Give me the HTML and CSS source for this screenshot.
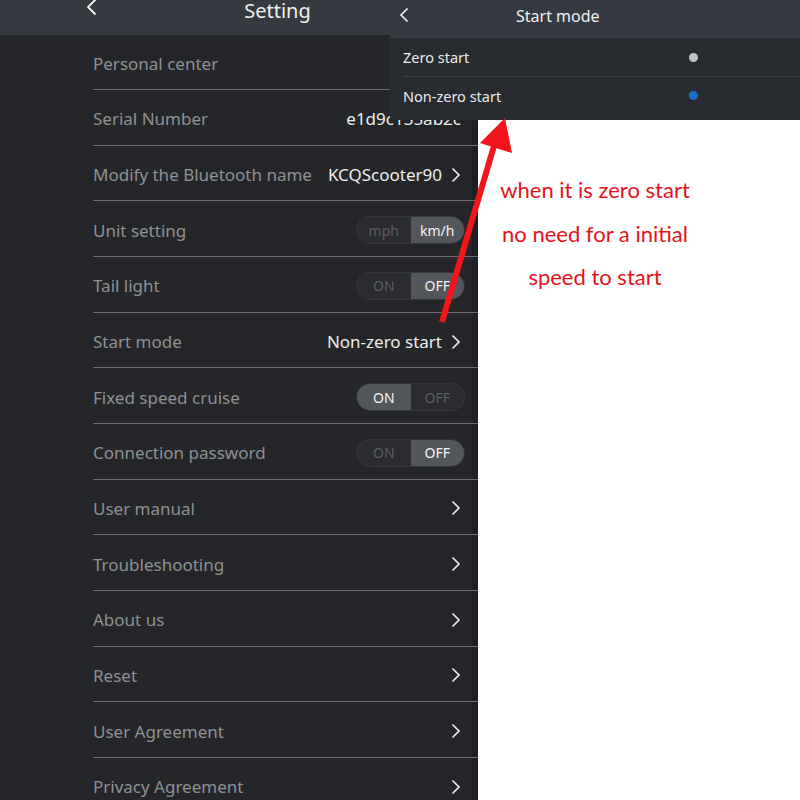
FILE: index.html
```html
<!DOCTYPE html>
<html lang="en">
<head>
<meta charset="utf-8">
<title>Setting</title>
<link rel="stylesheet" href="styles.css">
</head>
<body>
<div class="page">
  <section class="settings">
    <header class="topbar">
      <svg class="back" width="11" height="18" viewBox="0 0 11 18"><path d="M9.5 1.5 L2 9 L9.5 16.5" fill="none" stroke="#f2f2f2" stroke-width="1.8"/></svg>
      <h1 class="title">Setting</h1>
    </header>
    <ul class="list">
      <li class="row"><span class="label">Personal center</span></li>
      <li class="row"><span class="label">Serial Number</span><span class="value">e1d9c135ab2c</span></li>
      <li class="row"><span class="label">Modify the Bluetooth name</span><span class="value">KCQScooter90</span><svg class="chev" width="10" height="16" viewBox="0 0 10 16"><path d="M1.5 1.5 L8 8 L1.5 14.5" fill="none" stroke="#f0f0f0" stroke-width="1.6"/></svg></li>
      <li class="row"><span class="label">Unit setting</span><span class="toggle"><span class="opt">mph</span><span class="opt on">km/h</span></span></li>
      <li class="row"><span class="label">Tail light</span><span class="toggle"><span class="opt">ON</span><span class="opt on">OFF</span></span></li>
      <li class="row"><span class="label">Start mode</span><span class="value">Non-zero start</span><svg class="chev" width="10" height="16" viewBox="0 0 10 16"><path d="M1.5 1.5 L8 8 L1.5 14.5" fill="none" stroke="#f0f0f0" stroke-width="1.6"/></svg></li>
      <li class="row"><span class="label">Fixed speed cruise</span><span class="toggle"><span class="opt on">ON</span><span class="opt">OFF</span></span></li>
      <li class="row"><span class="label">Connection password</span><span class="toggle"><span class="opt">ON</span><span class="opt on">OFF</span></span></li>
      <li class="row"><span class="label">User manual</span><svg class="chev" width="10" height="16" viewBox="0 0 10 16"><path d="M1.5 1.5 L8 8 L1.5 14.5" fill="none" stroke="#f0f0f0" stroke-width="1.6"/></svg></li>
      <li class="row"><span class="label">Troubleshooting</span><svg class="chev" width="10" height="16" viewBox="0 0 10 16"><path d="M1.5 1.5 L8 8 L1.5 14.5" fill="none" stroke="#f0f0f0" stroke-width="1.6"/></svg></li>
      <li class="row"><span class="label">About us</span><svg class="chev" width="10" height="16" viewBox="0 0 10 16"><path d="M1.5 1.5 L8 8 L1.5 14.5" fill="none" stroke="#f0f0f0" stroke-width="1.6"/></svg></li>
      <li class="row"><span class="label">Reset</span><svg class="chev" width="10" height="16" viewBox="0 0 10 16"><path d="M1.5 1.5 L8 8 L1.5 14.5" fill="none" stroke="#f0f0f0" stroke-width="1.6"/></svg></li>
      <li class="row"><span class="label">User Agreement</span><svg class="chev" width="10" height="16" viewBox="0 0 10 16"><path d="M1.5 1.5 L8 8 L1.5 14.5" fill="none" stroke="#f0f0f0" stroke-width="1.6"/></svg></li>
      <li class="row"><span class="label">Privacy Agreement</span><svg class="chev" width="10" height="16" viewBox="0 0 10 16"><path d="M1.5 1.5 L8 8 L1.5 14.5" fill="none" stroke="#f0f0f0" stroke-width="1.6"/></svg></li>
    </ul>
  </section>

  <section class="note">
    <p class="note-text">when it is zero start<br>no need for a initial<br>speed to start</p>
  </section>

  <div class="popup">
    <header class="popup-bar">
      <svg class="back-small" width="10" height="16" viewBox="0 0 10 16"><path d="M8.5 1.5 L2 8 L8.5 14.5" fill="none" stroke="#f2f2f2" stroke-width="1.6"/></svg>
      <h2 class="popup-title">Start mode</h2>
    </header>
    <ul class="popup-list">
      <li class="popup-row"><span>Zero start</span><span class="dot"></span></li>
      <li class="popup-row"><span>Non-zero start</span><span class="dot active"></span></li>
    </ul>
  </div>

  <svg class="arrow" width="800" height="800" viewBox="0 0 800 800">
    <line x1="442" y1="322" x2="494" y2="146" stroke="#f0161c" stroke-width="6"/>
    <polygon points="505,118 480,143 512,153" fill="#f0161c"/>
  </svg>
</div>
</body>
</html>
```

FILE: styles.css
```css
* { box-sizing: border-box; }
html, body {
  margin: 0;
  padding: 0;
  width: 800px;
  height: 800px;
  overflow: hidden;
  background: #24262a;
  font-family: "Noto Sans", "Open Sans", sans-serif;
}
.page {
  position: relative;
  width: 800px;
  height: 800px;
  display: grid;
  grid-template-columns: 478px 1fr;
}
.settings {
  background: #24262a;
  box-shadow: inset -6px 0 0 #1d1f22;
  height: 800px;
  overflow: hidden;
}
.topbar {
  height: 34.5px;
  background: #353a41;
  display: flex;
  align-items: flex-start;
  padding-left: 86px;
  padding-right: 20px;
}
.back { margin-top: -2px; flex: none; }
.title {
  flex: 1;
  margin: 0;
  text-align: center;
  font-weight: 400;
  font-size: 20px;
  line-height: 22px;
  color: #f0f0f0;
}
.list {
  list-style: none;
  margin: 0 0 0 93px;
  padding: 0;
}
.row {
  height: 55.65px;
  border-bottom: 1.5px solid #6a6d71;
  display: flex;
  align-items: center;
  padding-top: 3px;
  padding-right: 17px;
  gap: 9px;
}
.label {
  flex: 1;
  font-size: 17px;
  color: #8f9195;
  white-space: nowrap;
}
.value {
  font-size: 17px;
  color: #ececec;
  white-space: nowrap;
}
.chev { flex: none; }
.toggle {
  display: flex;
  width: 109px;
  height: 28px;
  margin-right: -4px;
  border-radius: 14px;
  background: #2a2c30;
  border: 1px solid #33363a;
  overflow: hidden;
}
.opt {
  flex: 1;
  display: flex;
  align-items: center;
  justify-content: center;
  font-size: 14px;
  color: #5b5e62;
}
.opt.on {
  background: #53565b;
  color: #f4f4f4;
}

.note {
  background: #ffffff;
  margin-top: 120px;
  padding: 48px 0 0 21px;
}
.note-text {
  margin: 0;
  width: 192px;
  text-align: center;
  font-family: "Lato", "Open Sans", sans-serif;
  font-size: 22px;
  line-height: 43.5px;
  color: #e3131b;
}

.popup {
  position: absolute;
  left: 390px;
  top: 0;
  width: 410px;
  height: 120px;
  background: #282b2f;
}
.popup-bar {
  height: 38px;
  background: #353a42;
  display: flex;
  align-items: center;
  padding-left: 9px;
}
.popup-title {
  margin: 0 0 0 107px;
  font-weight: 400;
  font-size: 16px;
  color: #f0f0f0;
  position: relative;
  top: -3px;
}
.back-small { position: relative; top: -4px; }
.popup-list {
  list-style: none;
  margin: 0;
  padding: 0 0 0 13px;
}
.popup-row {
  height: 38px;
  display: flex;
  align-items: center;
  justify-content: space-between;
  padding-right: 102px;
  font-size: 14.5px;
  color: #ececec;
}
.popup-row + .popup-row { border-top: 1px solid #3a3d42; }
.dot {
  width: 9px;
  height: 9px;
  border-radius: 50%;
  background: #c2c2c2;
}
.dot.active { background: #1c6ec8; }

.arrow {
  position: absolute;
  left: 0;
  top: 0;
  pointer-events: none;
}
```
